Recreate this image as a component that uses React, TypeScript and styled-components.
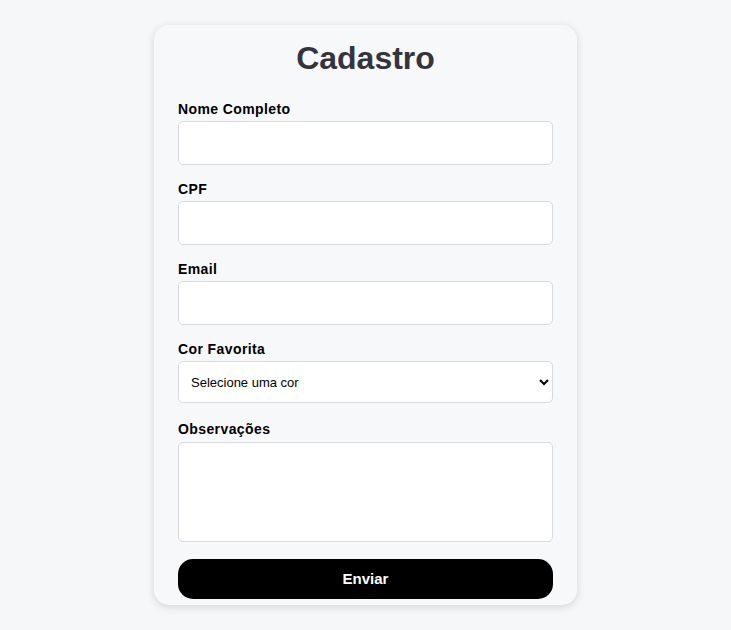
import * as React from "react";
import styled, { createGlobalStyle } from "styled-components";

const GlobalStyle = createGlobalStyle`
  html, body {
    margin: 0;
    padding: 0;
    background: #f6f7f9;
    font-family: "Liberation Sans", Arial, sans-serif;
  }
  * {
    box-sizing: border-box;
  }
`;

const Page = styled.div`
  min-height: 630px;
  display: flex;
  justify-content: center;
  padding-top: 25px;
`;

const Card = styled.div`
  width: 423px;
  height: 580px;
  padding: 15px 24px 6px;
  background: #f7f8fa;
  border-radius: 15px;
  box-shadow: 0 2px 8px rgba(0, 0, 0, 0.14);
`;

const Title = styled.h1`
  margin: 0;
  font-size: 32px;
  line-height: 37px;
  font-weight: bold;
  color: #34343e;
  text-align: center;
`;

const Form = styled.form`
  margin-top: 24px;
  display: flex;
  flex-direction: column;
`;

const Field = styled.div<{ $gap?: number }>`
  display: flex;
  flex-direction: column;
  margin-bottom: ${(p) => p.$gap ?? 16}px;
`;

const Label = styled.label<{ $space?: number }>`
  font-size: 14px;
  line-height: 16px;
  font-weight: bold;
  letter-spacing: 0.4px;
  color: #000;
  margin-bottom: ${(p) => p.$space ?? 4}px;
`;

const fieldBox = `
  width: 100%;
  background: #fff;
  border: 1px solid #d8dade;
  border-radius: 5px;
  font-family: "Liberation Sans", Arial, sans-serif;
  font-size: 13px;
  outline: none;
`;

const Input = styled.input`
  ${fieldBox}
  height: 44px;
  padding: 0 12px;
`;

const Select = styled.select`
  ${fieldBox}
  height: 42px;
  padding: 0 8px;
  color: #000;
`;

const TextArea = styled.textarea`
  ${fieldBox}
  display: block;
  height: 100px;
  padding: 10px 12px;
  resize: none;
`;

const Button = styled.button`
  margin-top: 1px;
  height: 40px;
  width: 100%;
  padding: 0 0 2px;
  border: none;
  border-radius: 15px;
  background: #000;
  color: #fff;
  font-family: "Liberation Sans", Arial, sans-serif;
  font-size: 15px;
  font-weight: bold;
  cursor: pointer;
`;

const App = () => {
  return (
    <>
      <GlobalStyle />
      <Page>
        <Card>
          <Title>Cadastro</Title>
          <Form onSubmit={(e) => e.preventDefault()}>
            <Field>
              <Label htmlFor="nome">Nome Completo</Label>
              <Input id="nome" type="text" />
            </Field>
            <Field>
              <Label htmlFor="cpf">CPF</Label>
              <Input id="cpf" type="text" />
            </Field>
            <Field>
              <Label htmlFor="email">Email</Label>
              <Input id="email" type="email" />
            </Field>
            <Field $gap={18}>
              <Label htmlFor="cor">Cor Favorita</Label>
              <Select id="cor" defaultValue="">
                <option value="">Selecione uma cor</option>
                <option value="azul">Azul</option>
                <option value="verde">Verde</option>
                <option value="vermelho">Vermelho</option>
              </Select>
            </Field>
            <Field>
              <Label htmlFor="obs" $space={5}>Observações</Label>
              <TextArea id="obs" />
            </Field>
            <Button type="submit">Enviar</Button>
          </Form>
        </Card>
      </Page>
    </>
  );
};

export default App;
